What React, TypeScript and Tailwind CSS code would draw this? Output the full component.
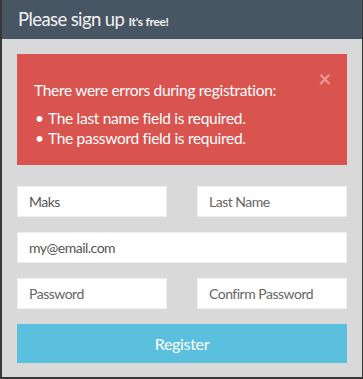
export default function App() {
  return (
    <div
      className="w-[363px] h-[379px] bg-[#373737] pl-[2px] pr-[1px] pb-[2px] flex flex-col"
      style={{ fontFamily: 'Lato, "Open Sans", sans-serif' }}
    >
      <header className="h-[39px] bg-[#485563] flex items-center pl-[16px]">
        <h1 className="text-[18.5px] text-[#f0f2f4] tracking-[-0.6px]">
          Please sign up{' '}
          <span className="text-[12px] font-bold tracking-[-0.3px]">It's free!</span>
        </h1>
      </header>

      <main className="flex-1 bg-[#d9d9d9] px-[15px] pt-[15px]">
        <div className="relative h-[111px] bg-[#d9534f] text-white pl-[17px] pt-[26px] tracking-[-0.3px]">
          <button className="absolute right-[16px] top-[14px] text-[22px] font-bold leading-none text-[#ea9a97]">
            ×
          </button>
          <p className="text-[15.5px] leading-[20px]">There were errors during registration:</p>
          <ul className="mt-[8px] text-[15.5px] leading-[20px]">
            <li className="flex">
              <span className="w-[14px] pl-[1px]">•</span>The last name field is required.
            </li>
            <li className="flex">
              <span className="w-[14px] pl-[1px]">•</span>The password field is required.
            </li>
          </ul>
        </div>

        <form className="mt-[21px] flex flex-col gap-[15px]">
          <div className="grid grid-cols-2 gap-[30px]">
            <input
              defaultValue="Maks"
              className="h-[31px] bg-white border border-[#eeeeee] px-[11px] text-[14px] tracking-[-0.5px] text-[#555]"
            />
            <input
              placeholder="Last Name"
              className="h-[31px] bg-white border border-[#eeeeee] px-[11px] text-[14px] tracking-[-0.5px] text-[#555] placeholder:text-[#666]"
            />
          </div>
          <input
            defaultValue="my@email.com"
            className="h-[31px] bg-white border border-[#eeeeee] px-[11px] text-[14px] tracking-[-0.5px] text-[#555]"
          />
          <div className="grid grid-cols-2 gap-[30px]">
            <input
              placeholder="Password"
              className="h-[31px] bg-white border border-[#eeeeee] px-[11px] text-[14px] tracking-[-0.5px] text-[#555] placeholder:text-[#666]"
            />
            <input
              placeholder="Confirm Password"
              className="h-[31px] bg-white border border-[#eeeeee] px-[11px] text-[14px] tracking-[-0.5px] text-[#555] placeholder:text-[#666]"
            />
          </div>
          <button
            type="button"
            className="h-[39px] bg-[#5bc0de] text-white text-[16px] tracking-[-0.3px]"
          >
            Register
          </button>
        </form>
      </main>
    </div>
  );
}
